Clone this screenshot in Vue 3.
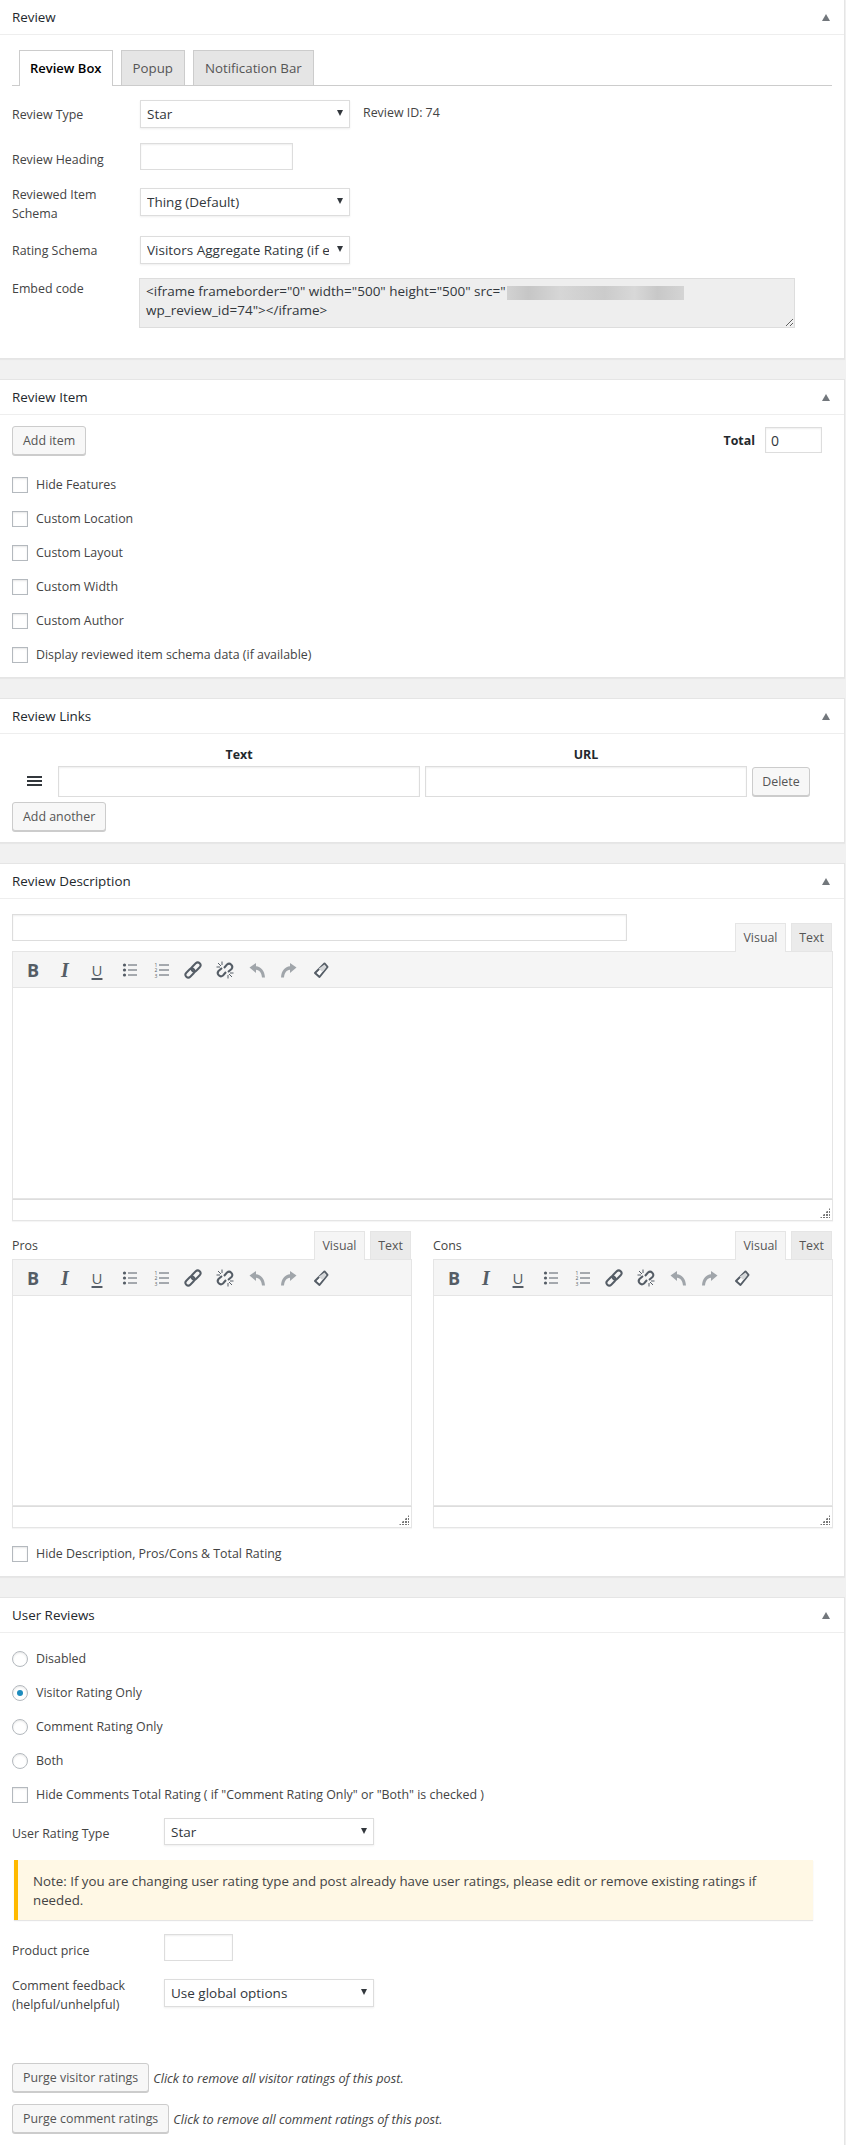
<script setup>
const tabs = [
  { label: "Review Box", active: true },
  { label: "Popup" },
  { label: "Notification Bar" },
];

const itemOptions = [
  "Hide Features",
  "Custom Location",
  "Custom Layout",
  "Custom Width",
  "Custom Author",
  "Display reviewed item schema data (if available)",
];

const radios = [
  { label: "Disabled" },
  { label: "Visitor Rating Only", checked: true },
  { label: "Comment Rating Only" },
  { label: "Both" },
];

// the main description editor, then the two side by side
const editors = [
  { id: "desc", main: true },
  { id: "pros", label: "Pros" },
  { id: "cons", label: "Cons" },
];

const embedCode = '<iframe frameborder="0" width="500" height="500" src="\nwp_review_id=74"></iframe>';
</script>

<template>
  <div class="page">
    <section class="panel first">
      <header class="panel-head"><h2>Review</h2><i class="toggle"></i></header>
      <div class="panel-body review-body">
        <div class="tabs">
          <a v-for="tab in tabs" :key="tab.label" :class="['tab', { active: tab.active }]">{{ tab.label }}</a>
        </div>

        <div class="field type-row">
          <label>Review Type</label>
          <div class="select-wrap"><select><option>Star</option></select></div>
          <span class="review-id">Review ID: 74</span>
        </div>
        <div class="field heading-row">
          <label>Review Heading</label>
          <input class="heading-input" type="text" />
        </div>
        <div class="field schema-row">
          <label>Reviewed Item<br />Schema</label>
          <div class="select-wrap"><select><option>Thing (Default)</option></select></div>
        </div>
        <div class="field rating-row">
          <label>Rating Schema</label>
          <div class="select-wrap"><select><option>Visitors Aggregate Rating (if enabled)</option></select></div>
        </div>
        <div class="field embed-row">
          <label>Embed code</label>
          <div class="embed">
            <textarea readonly :value="embedCode"></textarea>
            <span class="blurred"></span>
          </div>
        </div>
      </div>
    </section>

    <section class="panel">
      <header class="panel-head"><h2>Review Item</h2><i class="toggle"></i></header>
      <div class="panel-body item-body">
        <div class="item-top">
          <button class="btn">Add item</button>
          <div class="total"><b>Total</b><input type="text" value="0" /></div>
        </div>
        <label v-for="opt in itemOptions" :key="opt" class="check"><input type="checkbox" />{{ opt }}</label>
      </div>
    </section>

    <section class="panel">
      <header class="panel-head"><h2>Review Links</h2><i class="toggle"></i></header>
      <div class="panel-body links-body">
        <div class="links-grid">
          <span></span>
          <b>Text</b>
          <b>URL</b>
          <span></span>
          <svg class="handle" viewBox="0 0 15 10" width="15" height="10">
            <path d="M0 0h15v2H0zM0 4h15v2H0zM0 8h15v2H0z" fill="#32373c" />
          </svg>
          <input type="text" />
          <input type="text" />
          <button class="btn">Delete</button>
        </div>
        <button class="btn add-another">Add another</button>
      </div>
    </section>

    <section class="panel">
      <header class="panel-head"><h2>Review Description</h2><i class="toggle"></i></header>
      <div class="panel-body desc-body">
        <div class="editors">
          <div v-for="ed in editors" :key="ed.id" :class="['editor', { main: ed.main }]">
            <div class="editor-top">
              <input v-if="ed.main" class="title-input" type="text" />
              <span v-else class="editor-label">{{ ed.label }}</span>
              <div class="editor-tabs"><a class="active">Visual</a><a>Text</a></div>
            </div>
            <div class="toolbar">
              <span class="tb tb-b">B</span>
              <span class="tb tb-i">I</span>
              <span class="tb tb-u">U</span>
              <svg class="tb-svg" viewBox="0 0 20 20">
                <circle cx="5.5" cy="5" r="1.6" /><circle cx="5.5" cy="10" r="1.6" /><circle cx="5.5" cy="15" r="1.6" />
                <path class="ln" d="M9 5h9M9 10h9M9 15h9" />
              </svg>
              <svg class="tb-svg" viewBox="0 0 20 20">
                <text x="3.5" y="6.5">1</text><text x="3.5" y="12">2</text><text x="3.5" y="17.5">3</text>
                <path class="ln" d="M8 5h10M8 10h10M8 15h10" />
              </svg>
              <svg class="tb-svg" viewBox="0 0 20 20">
                <g class="chain">
                  <rect x="1.8" y="10.2" width="10.4" height="5.6" rx="2.8" transform="rotate(-45 7 13)" />
                  <rect x="7.8" y="4.2" width="10.4" height="5.6" rx="2.8" transform="rotate(-45 13 7)" />
                </g>
              </svg>
              <svg class="tb-svg" viewBox="0 0 20 20">
                <g class="chain">
                  <path d="M9 8l3-3.500a3.200 3.200 0 0 1 4.500 4.500L13 12" />
                  <path d="M11 12l-3 3.500A3.200 3.200 0 0 1 3.500 11L7 8" />
                </g>
                <path class="ln" d="M3 3l3 3M7 1.500V5M1.500 7H5M17 17l-3-3M13 18.500V15M18.500 13H15" />
              </svg>
              <svg class="tb-svg off" viewBox="0 0 20 20">
                <path d="M2.500 7.500 9 3v3.300c5 .5 8.500 4.200 9 11.200h-3c-.5-5-2.500-7.300-6-7.700V13z" />
              </svg>
              <svg class="tb-svg off" viewBox="0 0 20 20">
                <path d="M17.500 7.500 11 3v3.300c-5 .5-8.500 4.200-9 11.200h3c.5-5 2.500-7.300 6-7.700V13z" />
              </svg>
              <svg class="tb-svg" viewBox="0 0 20 20">
                <path d="M13.500 3.500 16.500 7 8.500 17 4 13z" fill="#fff" stroke="#555d66" stroke-width="2" stroke-linejoin="round" />
                <path d="M13.500 4.500 15.500 7 11.500 12 7.500 8.800z" fill="#d5d7d9" />
              </svg>
            </div>
            <div class="content"></div>
            <div class="status"><i class="grip"></i></div>
          </div>
        </div>

        <label class="check hide-desc"><input type="checkbox" />Hide Description, Pros/Cons &amp; Total Rating</label>
      </div>
    </section>

    <section class="panel last">
      <header class="panel-head"><h2>User Reviews</h2><i class="toggle"></i></header>
      <div class="panel-body user-body">
        <label v-for="r in radios" :key="r.label" class="check">
          <input type="radio" name="user-reviews" :checked="r.checked" />{{ r.label }}
        </label>
        <label class="check"><input type="checkbox" />Hide Comments Total Rating ( if "Comment Rating Only" or "Both" is checked )</label>

        <div class="field wide rating-type">
          <label>User Rating Type</label>
          <div class="select-wrap"><select><option>Star</option></select></div>
        </div>

        <div class="note">Note: If you are changing user rating type and post already have user ratings, please edit or remove existing ratings if needed.</div>

        <div class="field wide price-row">
          <label>Product price</label>
          <input class="price-input" type="text" />
        </div>
        <div class="field wide feedback-row">
          <label>Comment feedback<br />(helpful/unhelpful)</label>
          <div class="select-wrap"><select><option>Use global options</option></select></div>
        </div>

        <div class="purge purge-first"><button class="btn">Purge visitor ratings</button><em>Click to remove all visitor ratings of this post.</em></div>
        <div class="purge"><button class="btn">Purge comment ratings</button><em>Click to remove all comment ratings of this post.</em></div>
      </div>
    </section>
  </div>
</template>

<style scoped>
.page {
  width: 845px;
  font-family: "Open Sans", "Noto Sans", sans-serif;
  font-size: 12.4px;
  color: #444;
}

.panel {
  background: #fff;
  border: 1px solid #e5e5e5;
  border-left: 0;
  box-shadow: 0 1px 1px rgba(0, 0, 0, 0.04);
  margin-bottom: 20px;
}

.panel.first {
  border-top: 0;
}

.panel.last {
  margin-bottom: 0;
  border-bottom: 0;
}

.panel-head {
  height: 34px;
  padding: 0 12px;
  display: flex;
  align-items: center;
  justify-content: space-between;
  border-bottom: 1px solid #eee;
}

.panel-head h2 {
  margin: 0;
  font-size: 13.4px;
  font-weight: 500;
  color: #23282d;
}

.toggle {
  width: 0;
  height: 0;
  margin-right: 2px;
  border-left: 4px solid transparent;
  border-right: 4px solid transparent;
  border-bottom: 7px solid #72777c;
}

/* tabs */
.review-body {
  padding: 15px 12px 30px;
}

.tabs {
  display: flex;
  gap: 8px;
  height: 35px;
  padding-left: 7px;
  border-bottom: 1px solid #ccc;
}

.tab {
  height: 35px;
  box-sizing: border-box;
  padding: 0 11px;
  line-height: 34px;
  font-size: 13.3px;
  font-weight: 500;
  color: #555;
  background: #e5e5e5;
  border: 1px solid #ccc;
  border-bottom: 0;
}

.tab.active {
  height: 36px;
  padding: 0 10px;
  font-size: 13px;
  font-weight: 600;
  color: #000;
  background: #fff;
}

/* fields */
.field {
  display: flex;
  align-items: flex-start;
}

.field > label {
  width: 128px;
  flex: none;
  line-height: 19px;
}

.field.wide > label {
  width: 152px;
}

.type-row {
  margin-top: 14px;
}

.type-row > label {
  padding-top: 5px;
}

.review-id {
  margin-left: 13px;
  padding-top: 3px;
  line-height: 19px;
}

.heading-row {
  margin-top: 15px;
}

.heading-row > label {
  padding-top: 7px;
}

.heading-input {
  width: 153px;
  height: 27px;
}

.schema-row {
  margin-top: 18px;
}

.schema-row > label {
  margin-top: -3px;
}

.rating-row {
  margin-top: 13px;
}

.rating-row > label {
  padding-top: 5px;
}

.embed-row {
  margin-top: 14px;
}

.embed-row > label {
  margin-top: 1px;
}

input[type="text"] {
  box-sizing: border-box;
  border: 1px solid #ddd;
  box-shadow: inset 0 1px 2px rgba(0, 0, 0, 0.07);
  background: #fff;
  font: inherit;
  color: #32373c;
  outline: 0;
  padding: 0 5px;
  margin: 0;
  display: block;
}

.select-wrap {
  position: relative;
  width: 210px;
  height: 28px;
}

.select-wrap::after {
  content: "";
  position: absolute;
  right: 7px;
  top: 10px;
  border-left: 3.5px solid transparent;
  border-right: 3.5px solid transparent;
  border-top: 6px solid #32373c;
  pointer-events: none;
}

select {
  appearance: none;
  -webkit-appearance: none;
  display: block;
  width: 100%;
  height: 100%;
  box-sizing: border-box;
  border: 1px solid #ddd;
  box-shadow: 0 1px 2px rgba(0, 0, 0, 0.07);
  border-radius: 0;
  background: #fff;
  font: inherit;
  font-size: 13.5px;
  color: #32373c;
  padding: 0 20px 0 6px;
  outline: 0;
}

.embed {
  position: relative;
  width: 656px;
  height: 50px;
  margin-left: -1px;
}

.embed textarea {
  display: block;
  width: 100%;
  height: 100%;
  box-sizing: border-box;
  border: 1px solid #ddd;
  background: #eee;
  color: #32373c;
  font: inherit;
  font-size: 13.5px;
  line-height: 19px;
  padding: 3px 6px;
  outline: 0;
  overflow: hidden;
  white-space: pre;
}

.blurred {
  position: absolute;
  left: 368px;
  top: 8px;
  width: 177px;
  height: 14px;
  background: linear-gradient(90deg, #d2d2d2, #c6c6c6 12%, #d6d6d6 30%, #cbcbcb 55%, #d8d8d8 72%, #c8c8c8 85%, #d4d4d4);
}

/* buttons */
.btn {
  height: 29px;
  box-sizing: border-box;
  padding: 0 10px;
  background: #f7f7f7;
  border: 1px solid #ccc;
  border-radius: 3px;
  box-shadow: 0 1px 0 #ccc;
  color: #555;
  font: inherit;
  white-space: nowrap;
}

/* review item */
.item-body {
  padding: 11px 22px 14px 12px;
}

.item-top {
  display: flex;
  justify-content: space-between;
  align-items: flex-start;
  margin-bottom: 22px;
}

.total {
  display: flex;
  align-items: center;
  gap: 10px;
  margin-top: 1px;
  color: #23282d;
}

.total input {
  width: 57px;
  height: 26px;
  font-size: 14px;
}

.check {
  display: flex;
  align-items: center;
  height: 16px;
  line-height: 16px;
  white-space: nowrap;
}

.check + .check {
  margin-top: 18px;
}

.check input {
  appearance: none;
  -webkit-appearance: none;
  flex: none;
  width: 16px;
  height: 16px;
  margin: 0 8px 0 0;
  border: 1px solid #b4b9be;
  background: #fff;
  box-shadow: inset 0 1px 2px rgba(0, 0, 0, 0.1);
  outline: 0;
}

.check input[type="radio"] {
  border-radius: 50%;
  display: grid;
  place-items: center;
}

.check input[type="radio"]:checked::before {
  content: "";
  width: 6px;
  height: 6px;
  border-radius: 50%;
  background: #1e8cbe;
}

/* links */
.links-body {
  padding: 9px 22px 11px 12px;
}

.links-grid {
  display: grid;
  grid-template-columns: 41px 362px 322px 58px;
  grid-template-rows: 22px 32px;
  column-gap: 5px;
  align-items: center;
  justify-items: center;
  color: #23282d;
}

.links-grid input {
  width: 100%;
  height: 31px;
}

.links-grid .handle {
  justify-self: start;
  margin-left: 15px;
}

.links-grid .btn {
  width: 100%;
  padding: 0;
}

.add-another {
  display: block;
  margin-top: 5px;
}

/* editors */
.desc-body {
  padding: 0 11px 14px 12px;
}

.editors {
  display: grid;
  grid-template-columns: 400px 400px;
  column-gap: 21px;
  row-gap: 10px;
}

.editor.main {
  grid-column: 1 / 3;
}

.editor-top {
  display: flex;
  justify-content: space-between;
  align-items: flex-end;
  height: 28px;
}

.editor.main .editor-top {
  height: 52px;
}

.title-input {
  width: 615px;
  height: 27px;
  align-self: flex-start;
  margin-top: 15px !important;
}

.editor-tabs {
  display: flex;
  gap: 5px;
  padding-right: 1px;
}

.editor-tabs a {
  width: 41px;
  height: 28px;
  box-sizing: border-box;
  line-height: 28px;
  text-align: center;
  color: #555;
  background: #ebebeb;
  border: 1px solid #e5e5e5;
  border-bottom: 0;
}

.editor-tabs a.active {
  width: 51px;
  background: #f5f5f5;
  margin-bottom: -1px;
  height: 29px;
  position: relative;
  z-index: 1;
}

.toolbar {
  display: flex;
  align-items: center;
  height: 37px;
  box-sizing: border-box;
  padding-left: 4px;
  background: #f5f5f5;
  border: 1px solid #e5e5e5;
}

.tb,
.tb-svg {
  flex: none;
  width: 32px;
  text-align: center;
  color: #555d66;
}

.tb {
  font-size: 18px;
  line-height: 20px;
}

.tb-b {
  font-weight: 700;
}

.tb-i {
  font-size: 20px;
  font-style: italic;
  font-weight: 700;
  font-family: "Liberation Serif", serif;
}

.tb-u {
  font-size: 15px;
  text-decoration: underline;
  text-underline-offset: 2px;
  text-decoration-thickness: 2px;
}

.tb-svg {
  height: 20px;
  padding: 0 6px;
  box-sizing: border-box;
  fill: #555d66;
}

.tb-svg.off {
  fill: #a0a5aa;
}

.tb-svg .ln {
  fill: none;
  stroke: #555d66;
  stroke-width: 1;
}

.tb-svg text {
  font-size: 5px;
  font-family: "Open Sans", sans-serif;
  fill: #555d66;
}

.tb-svg .chain {
  fill: none;
  stroke: #555d66;
  stroke-width: 2;
}

.content {
  height: 210px;
  background: #fff;
  border: 1px solid #e5e5e5;
  border-top: 0;
  box-sizing: border-box;
}

.editor.main .content {
  height: 211px;
}

.status {
  position: relative;
  height: 22px;
  background: #fff;
  border: 1px solid #e5e5e5;
  border-top: 1px solid #ddd;
  box-sizing: border-box;
  box-shadow: 0 1px 1px rgba(0, 0, 0, 0.04);
}

.grip {
  position: absolute;
  right: 2px;
  bottom: 2px;
  width: 10px;
  height: 10px;
  background: radial-gradient(circle at 1px 1px, #777 1px, transparent 1.1px) 0 0 / 3px 3px;
  clip-path: polygon(100% 0, 100% 100%, 0 100%);
}

.editor-label {
  align-self: flex-start;
  padding-top: 5px;
  line-height: 19px;
}

.hide-desc {
  margin-top: 18px;
}

/* user reviews */
.user-body {
  padding: 18px 12px 12px;
}

.rating-type {
  margin-top: 15px;
}

.rating-type > label {
  padding-top: 6px;
}

.rating-type .select-wrap {
  height: 27px;
}

.note {
  width: 799px;
  box-sizing: border-box;
  margin: 15px 0 14px 2px;
  padding: 12px 15px 10px;
  background: #fff8e5;
  border-left: 4px solid #ffb900;
  box-shadow: 0 1px 1px rgba(0, 0, 0, 0.1);
  font-size: 13.3px;
  line-height: 19px;
  color: #444;
}

.price-row > label {
  padding-top: 7px;
}

.price-input {
  width: 69px;
  height: 27px;
}

.feedback-row {
  margin-top: 18px;
}

.feedback-row > label {
  margin-top: -3px;
}

.purge {
  display: flex;
  align-items: center;
  margin-top: 12px;
}

.purge-first {
  margin-top: 49px;
}

.purge em {
  margin-left: 4px;
  font-size: 12.7px;
}
</style>

<style>
html,
body {
  margin: 0;
  background: #f1f1f1;
}
</style>
